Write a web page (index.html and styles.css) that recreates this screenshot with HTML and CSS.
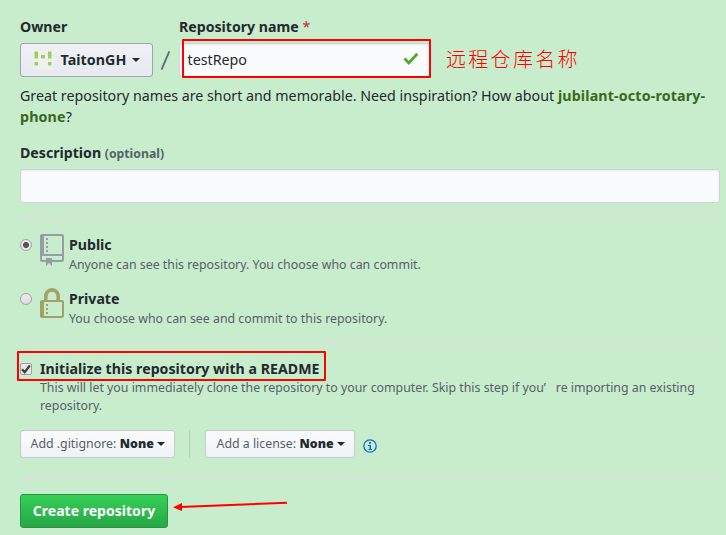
FILE: index.html
```
<!DOCTYPE html>
<html lang="en">
<head>
<meta charset="utf-8">
<title>Create a new repository</title>
<link rel="stylesheet" href="styles.css">
</head>
<body>
<main class="form">
  <div class="top">
    <div class="field">
      <div class="label">Owner</div>
      <button class="btn owner" type="button">
        <svg class="avatar" width="20" height="20" viewBox="0 0 20 20"><path fill="#f0f0f0" d="M0 0h20v20H0z"/><path fill="#9bcf60" d="M1.500 1.500h3.500v7H1.500zM15 1.500h3.500v7H15zM8 5h4v3.500H8zM1.500 12H5v3.500H1.500zM15 12h3.500v3.500H15z"/></svg>
        <span class="owner-name">TaitonGH</span><i class="caret"></i>
      </button>
    </div>
    <svg class="slash" width="26" height="34" viewBox="0 0 26 34"><path d="M8.500 26.600 16.300 8.400" stroke="#606a6c" stroke-width="1.800"/></svg>
    <div class="field">
      <div class="label">Repository name <span class="required">*</span></div>
      <div class="input repo">
        <span>testRepo</span>
        <svg width="16" height="14" viewBox="0 0 16 14"><path d="M1.500 6.500 5.800 11 14.300 1.800" fill="none" stroke="#55a532" stroke-width="2.900"/></svg>
        <span class="mark mark-name"></span>
      </div>
    </div>
    <div class="caption" lang="zh">远程仓库名称</div>
  </div>
  <p class="hint">Great repository names are short and memorable. Need inspiration? How about <b>jubilant-octo-rotary-<br>phone</b>?</p>
  <div class="label description">Description <span class="optional">(optional)</span></div>
  <div class="input"></div>
  <hr>
  <div class="option public">
    <span class="radio checked"></span>
    <svg class="icon" width="24" height="32" viewBox="0 0 24 32"><path fill="#959da5" fill-rule="evenodd" d="M8 18H6v-2h2v2zm0-4H6v-2h2v2zm0-4H6V8h2v2zm0-4H6V4h2v2zM24 2v24c0 1.100-.9 2-2 2H12v4l-3-3-3 3v-4H2c-1.100 0-2-.9-2-2V2C0 .9.9 0 2 0h20c1.100 0 2 .9 2 2zm-2 20H2v4h4v-2h6v2h10v-4zm0-20H4v18h18V2z"/></svg>
    <div><div class="title">Public</div><div class="sub">Anyone can see this repository. You choose who can commit.</div></div>
  </div>
  <div class="option private">
    <span class="radio"></span>
    <svg class="icon" width="24" height="32" viewBox="0 0 24 32"><path fill="#a0a268" fill-rule="evenodd" d="M8 26H6v-2h2v2zm0-4H6v-2h2v2zm0-4H6v-2h2v2zM24 14v14c0 1.100-.9 2-2 2H2c-1.100 0-2-.9-2-2V14c0-1.100.9-2 2-2h2V8.200C4 3.700 7.600 0 12 0s8 3.700 8 8.200V12h2c1.100 0 2 .9 2 2zM7.600 12h8.800V8.200c0-2.500-1.900-4.400-4.400-4.400S7.600 5.700 7.600 8.200V12zM22 14H4v14h18V14z"/></svg>
    <div><div class="title">Private</div><div class="sub">You choose who can see and commit to this repository.</div></div>
  </div>
  <hr>
  <div class="init">
    <span class="checkbox"><svg width="10" height="10" viewBox="0 0 10 10"><path d="M1 5.200 3.700 8.200 8.800 1.500" fill="none" stroke="#3d3d3d" stroke-width="2.200"/></svg></span>
    <div><div class="title">Initialize this repository with a README</div>
    <div class="sub">This will let you immediately clone the repository to your computer. Skip this step if you<span class="apostrophe">’</span>re importing an existing<br>repository.</div></div>
    <span class="mark mark-init"></span>
  </div>
  <div class="selects">
    <button class="btn small" type="button"><span>Add .gitignore:</span><b>None</b><i class="caret"></i></button>
    <span class="divider"></span>
    <button class="btn small license" type="button"><span>Add a license:</span><b>None</b><i class="caret"></i></button>
    <svg class="info" width="14" height="14" viewBox="0 0 14 14"><circle cx="7" cy="7" r="6.200" fill="none" stroke="#0b6bd0" stroke-width="1.300"/><path fill="#0b6bd0" d="M6 3h2v1.700H6zM5 6h3v4h1v1H5.500v-1h1V7H5z"/></svg>
  </div>
  <hr>
  <div class="actions">
    <button class="btn primary" type="button">Create repository</button>
    <svg class="arrow" width="124" height="20" viewBox="0 0 124 20"><path d="M12 8.900 119 4.700" stroke="#f00" stroke-width="2"/><path fill="#f00" d="M5 9.300 14 5V13z"/></svg>
  </div>
</main>
</body>
</html>
```
FILE: styles.css
```
* { box-sizing: border-box; }
body {
  margin: 0;
  height: 535px;
  overflow: hidden;
  background: #c7edcc;
  color: #24292e;
  font: 14.250px/21px "Noto Sans", "Open Sans", sans-serif;
}
.form { width: 726px; padding: 16px 6px 0 20px; }
.top { display: flex; align-items: flex-end; height: 61px; }
.label, .title { font-size: 14.150px; font-weight: 700; white-space: nowrap; }
.label { height: 27px; }
.required { color: #cb2431; font-weight: 400; }
.btn {
  display: flex;
  align-items: center;
  margin: 0;
  border: 1px solid #c5cbcf;
  border-radius: 3px;
  background: linear-gradient(#fafbfc, #eff3f6);
  color: #24292e;
  font: 700 14.250px/20px "Noto Sans", sans-serif;
  white-space: nowrap;
}
.owner {
  width: 133px;
  height: 34px;
  padding: 0 0 0 12px;
  border-color: #a2a5b0;
  background: linear-gradient(#eff1f6, #e6e9ef);
}
.owner-name { width: 66px; margin-left: 7.500px; letter-spacing: 0.05px; }
.caret {
  border: 4px solid transparent;
  border-top-color: #24292e;
  border-bottom: 0;
  margin-left: 5px;
}
.slash { flex: none; }
.input {
  position: relative;
  display: flex;
  align-items: center;
  height: 34px;
  border: 1px solid #cfd3dc;
  border-radius: 3px;
  background: #fafbfd;
  box-shadow: inset 0 1px 2px rgba(27, 31, 35, 0.075);
}
.repo { width: 251px; padding: 0 10px 2px 7.500px; justify-content: space-between; }
.mark { position: absolute; border: 2px solid #f00; border-radius: 1px; }
.mark-name { left: 2px; top: -5px; width: 249px; height: 39px; }
.caption {
  margin-left: 16px;
  height: 34px;
  color: #f00;
  font: 300 20px/32px "Noto Sans CJK SC", sans-serif;
  letter-spacing: 2.300px;
}
.hint { margin: 8px 0 0; height: 58px; white-space: nowrap; }
.hint b { color: #38681d; letter-spacing: 0.150px; }
.description { height: 27px; margin-top: -1px; }
.optional { color: #586069; font-size: 12.250px; }
hr { height: 2px; margin: 14px 0 0; border: 0; background: #d7e0dc; }
.option { display: flex; height: 54px; }
.public { margin-top: 15px; }
.radio {
  width: 12px;
  height: 12px;
  margin: 5px 8px 0 0;
  border: 1px solid #a2a5a3;
  border-radius: 50%;
  background: linear-gradient(#eee, #dcdcdc);
}
.checked { background: radial-gradient(circle, #555 0 2.600px, #e8e8e8 3.400px); }
.icon { margin: 0 5px 0 0; }
.option .title { height: 22px; }
.sub { color: #586069; font-size: 12.350px; line-height: 18px; white-space: nowrap; }
.private { margin-bottom: -15px; }
.init { position: relative; display: flex; height: 72px; margin-top: 15px; }
.init .title { height: 21px; letter-spacing: 0.030px; }
.checkbox {
  display: flex;
  align-items: center;
  justify-content: center;
  width: 12px;
  height: 12px;
  margin: 5px 8px 0 0;
  border: 1px solid #9ea1a0;
  border-radius: 2px;
  background: #e8e8e8;
}
.apostrophe { display: inline-block; width: 12px; }
.mark-init { left: -3px; top: -7px; width: 309px; height: 30px; }
.selects { display: flex; height: 28px; }
.small {
  width: 155px;
  height: 28px;
  padding: 0 0 0 9.500px;
  font-size: 12.350px;
}
.small span { color: #586069; font-weight: 400; }
.small b { margin-left: 3.500px; }
.small .caret { margin-left: 3px; }
.license { width: 150px; padding-left: 10.500px; }
.divider { width: 1px; margin: 0 15px 0 14px; background: #b9ccbe; }
.info { margin: 9px 0 0 8px; }
.selects + hr { margin-top: 19px; }
.actions { display: flex; margin-top: 15px; }
.primary {
  justify-content: center;
  width: 148px;
  height: 34px;
  padding: 0 0 1px;
  border-color: #279440;
  background: linear-gradient(#34d058, #28a745);
  color: #fff;
  font-size: 14.050px;
}
.arrow { margin: 4px 0 0; }
```
